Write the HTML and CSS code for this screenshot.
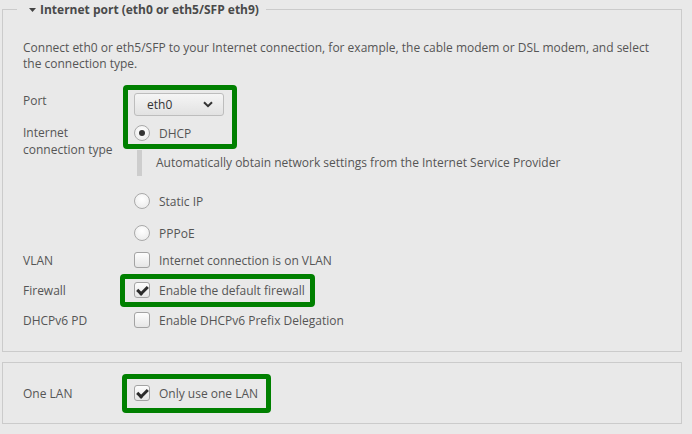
FILE: index.html
```html
<!DOCTYPE html>
<html>
<head>
<meta charset="utf-8">
<link rel="stylesheet" href="styles.css">
</head>
<body>
<div class="page">
  <fieldset class="panel">
    <legend class="legend"><svg class="caret" width="7" height="4" viewBox="0 0 7 4"><path d="M0 0H7L3.5 4Z" fill="#444"/></svg>Internet port (eth0 or eth5/SFP eth9)</legend>
    <p class="intro">Connect eth0 or eth5/SFP to your Internet connection, for example, the cable modem or DSL modem, and select the connection type.</p>
    <div class="form">
      <div class="label row-port">Port</div>
      <div class="ctrl row-port">
        <div class="select">eth0<svg class="chev" width="10" height="7" viewBox="0 0 10 7"><path d="M1 1.2L5 5.2L9 1.2" fill="none" stroke="#333" stroke-width="2"/></svg></div>
      </div>
      <div class="label label-type">Internet<br>connection type</div>
      <div class="ctrl options">
        <label class="option"><span class="radio checked"></span>DHCP</label>
        <div class="option-desc">Automatically obtain network settings from the Internet Service Provider</div>
        <label class="option"><span class="radio"></span>Static IP</label>
        <label class="option"><span class="radio"></span>PPPoE</label>
      </div>
      <div class="label row-check">VLAN</div>
      <div class="ctrl row-check"><label class="check"><span class="box"></span>Internet connection is on VLAN</label></div>
      <div class="label row-check">Firewall</div>
      <div class="ctrl row-check"><label class="check hl hl-fw"><span class="box checked"></span>Enable the default firewall</label></div>
      <div class="label row-check">DHCPv6 PD</div>
      <div class="ctrl row-check"><label class="check"><span class="box"></span>Enable DHCPv6 Prefix Delegation</label></div>
      <div class="highlight hl-port"></div>
    </div>
  </fieldset>
  <fieldset class="panel panel-lan">
    <div class="form">
      <div class="label row-check">One LAN</div>
      <div class="ctrl row-check"><label class="check hl hl-lan"><span class="box checked"></span>Only use one LAN</label></div>
    </div>
  </fieldset>
</div>
</body>
</html>
```
FILE: styles.css
```css
html, body {
  margin: 0;
  padding: 0;
  background: #e9e9e9;
}
body {
  font-family: "Open Sans", "DejaVu Sans", sans-serif;
  font-size: 12px;
  color: #555;
}
.page {
  padding: 0 10px 0 2px;
}
.panel {
  margin: 0;
  border: 1px solid #cbcbcb;
  padding: 0 20px 20px 20px;
  min-width: 0;
}
.legend {
  margin-left: -6px;
  padding: 0 7px 0 12px;
  font-weight: bold;
  font-size: 12px;
  line-height: 19px;
  color: #4a4a4a;
  display: flex;
  align-items: center;
}
.caret {
  margin: 1px 4px 0 0;
  display: block;
}
.intro {
  margin: 21px 0 21px 0;
  line-height: 16px;
  font-size: 12px;
}
.form {
  position: relative;
  display: grid;
  grid-template-columns: 110px 1fr;
}
.label {
  line-height: 17px;
}
.row-port.label {
  height: 24px;
  line-height: 16px;
}
.ctrl.row-port {
  height: 24px;
}
.label-type {
  padding-top: 7px;
  line-height: 17px;
}
.select {
  box-sizing: border-box;
  width: 90px;
  height: 23px;
  margin-left: 1px;
  border: 1px solid #bdbdbd;
  border-radius: 3px;
  background: linear-gradient(#f5f5f5, #e2e2e2);
  display: flex;
  align-items: center;
  justify-content: space-between;
  padding: 0 10px 0 12px;
  color: #333;
  font-size: 12px;
}
.chev { display: block; }
.options {
  display: flex;
  flex-direction: column;
}
.option {
  height: 32px;
  display: flex;
  align-items: center;
  color: #555;
}
.radio {
  box-sizing: border-box;
  width: 16px;
  height: 16px;
  border-radius: 50%;
  border: 1px solid #a9a9a9;
  background: radial-gradient(circle at 50% 35%, #ffffff, #e8e8e8);
  margin: 0 9px 0 1px;
  position: relative;
  flex: none;
}
.radio.checked::after {
  content: "";
  position: absolute;
  left: 4px;
  top: 4px;
  width: 6px;
  height: 6px;
  border-radius: 50%;
  background: #333;
}
.option-desc {
  margin: 1px 0 9px 4px;
  border-left: 5px solid #cdcdcd;
  height: 26px;
  line-height: 26px;
  padding-left: 14px;
  color: #555;
}
.row-check {
  height: 22px;
  display: flex;
  align-items: center;
  margin-bottom: 8px;
}
.form > .row-check:nth-last-child(-n+3) {
  margin-bottom: 0;
}
.check {
  display: flex;
  align-items: center;
  color: #555;
}
.box {
  box-sizing: border-box;
  width: 16px;
  height: 16px;
  border: 1px solid #a3a3a3;
  border-radius: 3px;
  background: linear-gradient(#fdfdfd, #e6e6e6);
  margin: 0 9px 0 1px;
  position: relative;
  flex: none;
}
.box.checked::after {
  content: "";
  position: absolute;
  left: 4px;
  top: 1px;
  width: 4px;
  height: 8px;
  border: solid #2b2b2b;
  border-width: 0 3px 3px 0;
  transform: rotate(45deg);
}
.hl {
  position: relative;
}
.hl::after {
  content: "";
  position: absolute;
  border: 5px solid #008000;
  border-radius: 4px;
}
.hl-fw::after {
  left: -13px;
  right: -10px;
  top: -8px;
  bottom: -8px;
}
.hl-lan::after {
  left: -11px;
  right: -13px;
  top: -11px;
  bottom: -11px;
}
.highlight {
  position: absolute;
  box-sizing: border-box;
  border: 5px solid #008000;
  border-radius: 4px;
  left: 100px;
  top: -8px;
  width: 114px;
  height: 64px;
}
.panel-lan {
  margin-top: 10px;
  padding-top: 19px;
  padding-bottom: 19px;
}
```
